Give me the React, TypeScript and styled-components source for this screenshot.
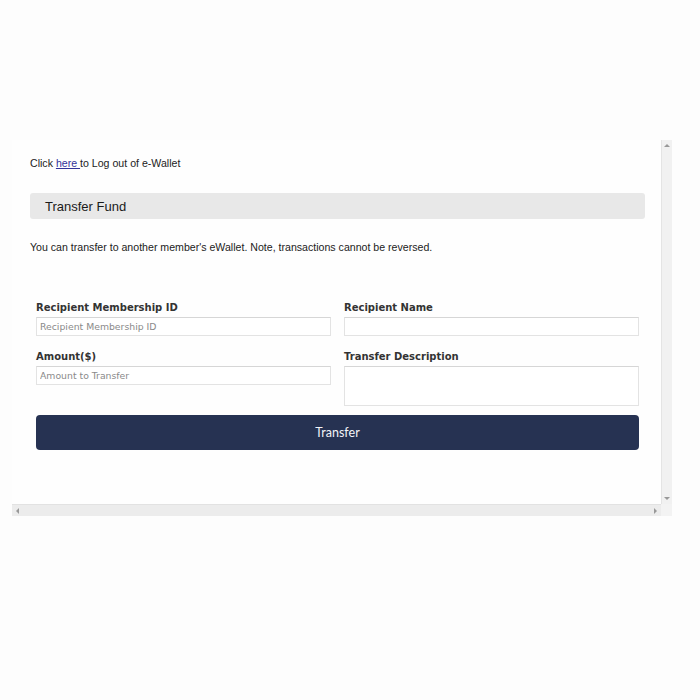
import React from "react";
import styled, { createGlobalStyle } from "styled-components";

const GlobalStyle = createGlobalStyle`
  html, body {
    margin: 0;
    padding: 0;
    background: #fdfdfd;
  }
`;

const Page = styled.div`
  padding: 140px 0 0 12px;
  width: 700px;
  height: 700px;
  box-sizing: border-box;
`;

const Frame = styled.div`
  width: 660px;
  height: 376px;
  display: grid;
  grid-template-columns: 649px 11px;
  grid-template-rows: 364px 12px;
  background: #fefefe;
`;

const Viewport = styled.div`
  padding: 17px 16px 0 18px;
  font-family: "Liberation Sans", Arial, sans-serif;
  color: #222;
  overflow: hidden;
`;

const Line = styled.p<{ $top?: number }>`
  margin: ${(p) => p.$top ?? 0}px 0 0;
  font-size: 10.6px;
  line-height: 13px;
  white-space: nowrap;
`;

const LogoutLink = styled.a`
  color: #33339a;
  text-decoration: underline;
`;

const SectionBar = styled.div`
  margin-top: 23px;
  height: 26px;
  background: #e8e8e8;
  border-radius: 3px;
  display: flex;
  align-items: center;
  padding-left: 15px;
  font-size: 13px;
  color: #1a1a1a;
`;

const Form = styled.form`
  margin-top: 47px;
  padding: 0 6px;
  display: grid;
  grid-template-columns: 295px 295px;
  column-gap: 13px;
  row-gap: 14px;
  align-items: start;
`;

const Field = styled.div`
  display: flex;
  flex-direction: column;
  gap: 3px;
`;

const Label = styled.label`
  font-family: "DejaVu Sans", Verdana, sans-serif;
  font-weight: bold;
  font-size: 10px;
  line-height: 13px;
  color: #333;
`;

const TextInput = styled.input`
  box-sizing: border-box;
  width: 100%;
  height: 19px;
  margin: 0;
  border: 1px solid #e3e3e3;
  border-top-color: #d6d6d6;
  background: #fff;
  padding: 0 3px;
  font-family: "DejaVu Sans", Verdana, sans-serif;
  font-size: 9.3px;
  color: #333;
  outline: none;
  &::placeholder {
    color: #8a8a8a;
  }
`;

const TextArea = styled.textarea`
  box-sizing: border-box;
  width: 100%;
  height: 40px;
  margin: 0;
  border: 1px solid #e3e3e3;
  border-top-color: #d6d6d6;
  background: #fff;
  resize: none;
  outline: none;
  display: block;
`;

const SubmitButton = styled.button`
  grid-column: 1 / span 2;
  margin-top: -5px;
  height: 35px;
  border: none;
  border-radius: 4px;
  background: #263252;
  color: #f2f4f8;
  font-family: Lato, "Open Sans", sans-serif;
  font-size: 12.5px;
`;

const VScroll = styled.div`
  background: #f1f1f1;
  border-left: 1px solid #e4e4e4;
  display: flex;
  flex-direction: column;
  justify-content: space-between;
  align-items: center;
  padding: 4px 0;
  box-sizing: border-box;
`;

const HScroll = styled.div`
  background: #ececec;
  border-top: 1px solid #e2e2e2;
  display: flex;
  justify-content: space-between;
  align-items: center;
  padding: 0 4px;
  box-sizing: border-box;
`;

const Corner = styled.div`
  background: #f3f3f3;
`;

const Arrow = styled.span<{ $dir: "up" | "down" | "left" | "right" }>`
  width: 0;
  height: 0;
  border: 3px solid transparent;
  ${(p) =>
    p.$dir === "up"
      ? "border-bottom-color: #999; border-top-width: 0;"
      : p.$dir === "down"
      ? "border-top-color: #999; border-bottom-width: 0;"
      : p.$dir === "left"
      ? "border-right-color: #999; border-left-width: 0;"
      : "border-left-color: #999; border-right-width: 0;"}
`;

export default function App() {
  return (
    <>
      <GlobalStyle />
      <Page>
        <Frame>
          <Viewport>
            <Line>
              Click <LogoutLink href="#">here </LogoutLink>to Log out of e-Wallet
            </Line>
            <SectionBar>Transfer Fund</SectionBar>
            <Line $top={22}>
              You can transfer to another member's eWallet. Note, transactions cannot be reversed.
            </Line>
            <Form onSubmit={(e) => e.preventDefault()}>
              <Field>
                <Label>Recipient Membership ID</Label>
                <TextInput placeholder="Recipient Membership ID" />
              </Field>
              <Field>
                <Label>Recipient Name</Label>
                <TextInput />
              </Field>
              <Field>
                <Label>Amount($)</Label>
                <TextInput placeholder="Amount to Transfer" />
              </Field>
              <Field>
                <Label>Transfer Description</Label>
                <TextArea />
              </Field>
              <SubmitButton type="submit">Transfer</SubmitButton>
            </Form>
          </Viewport>
          <VScroll>
            <Arrow $dir="up" />
            <Arrow $dir="down" />
          </VScroll>
          <HScroll>
            <Arrow $dir="left" />
            <Arrow $dir="right" />
          </HScroll>
          <Corner />
        </Frame>
      </Page>
    </>
  );
}
